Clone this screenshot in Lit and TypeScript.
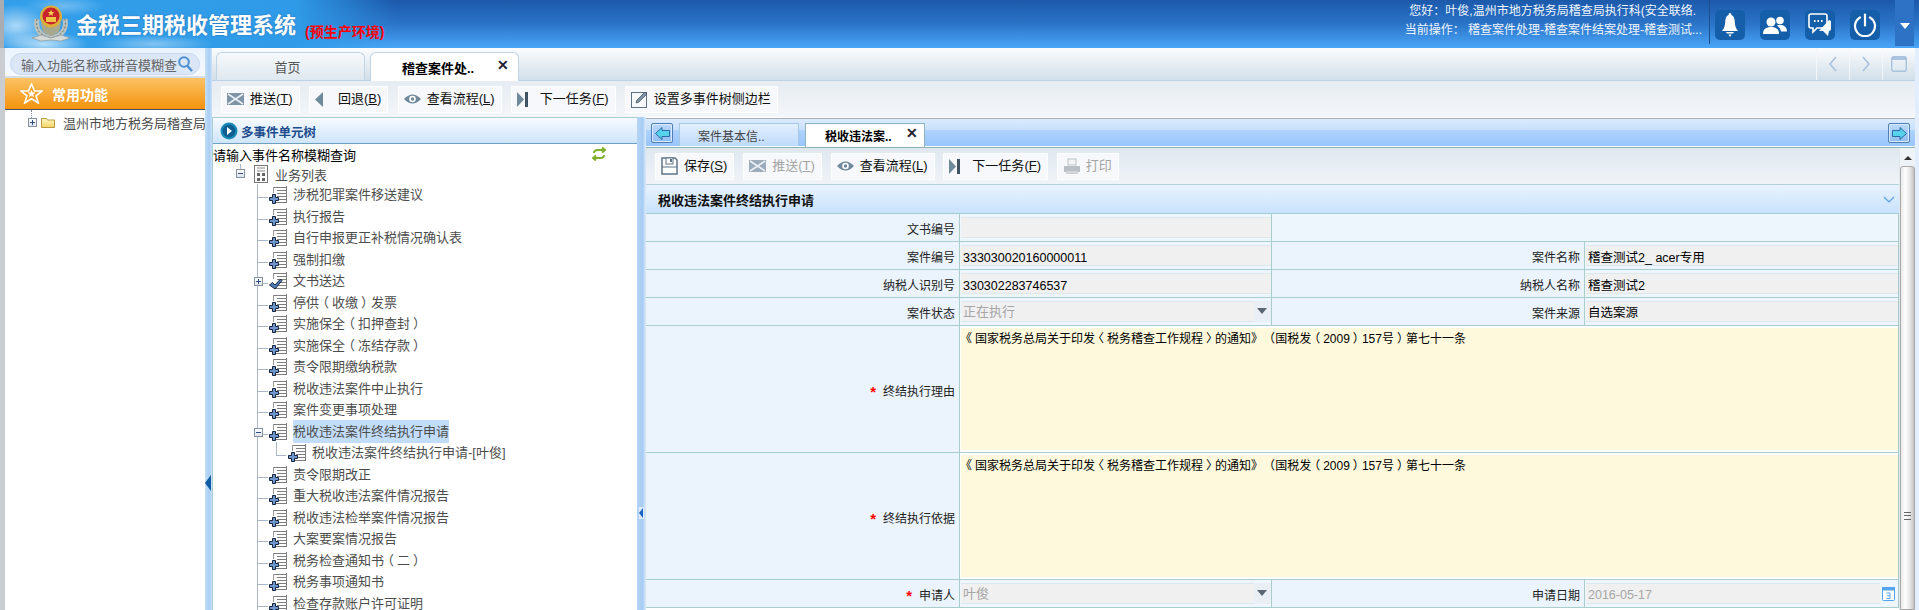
import { LitElement, html, css, svg } from "lit";
import { customElement } from "lit/decorators.js";

const FONT = css`"Liberation Sans", "Noto Sans CJK SC", sans-serif`;

const docBase = svg`
  <rect x="3.5" y="2.5" width="14" height="17" fill="#fff" stroke="none"/>
  <path d="M5 3.5h12M8 6.5h9M8 9.5h9M8 12.5h9M8 15.5h9M5 18.5h12M17.5 2v17" stroke="#7d7d7d" fill="none"/>
  <path d="M4.5 3v6" stroke="#9a9a9a" fill="none"/>`;
const plusIcon = html`<svg class="node" width="24" height="21" viewBox="0 0 24 21">
  ${docBase}
  <path d="M3.5 10.5h3v3h3v3h-3v3h-3v-3h-3v-3h3z" fill="#6d96cc" stroke="#16233a" stroke-width="1"/>
</svg>`;
const checkIcon = html`<svg class="node" width="24" height="21" viewBox="0 0 24 21">
  ${docBase}
  <path d="M0.5 15l3-2.5 2.5 2.5 5.5-6 1.500 1.500-7 8.500z" fill="#4f7db5" stroke="#16233a" stroke-width="1"/>
</svg>`;
const icons: Record<string, unknown> = {
  mail: html`<svg width="17" height="12" viewBox="0 0 17 12"><rect width="17" height="12" fill="#7e93a6"/><path d="M1 1l15 10M16 1L1 11" stroke="#e8eef3" stroke-width="1.6"/></svg>`,
  back: html`<svg width="9" height="15" viewBox="0 0 9 15"><path d="M8 0v15L0 7.5z" fill="#6f8a9b"/></svg>`,
  eye: html`<svg width="17" height="12" viewBox="0 0 17 12"><path d="M0 6Q8.5-3 17 6 8.5 15 0 6z" fill="#70899b"/><circle cx="8.5" cy="6" r="3.3" fill="#fff"/><circle cx="8.5" cy="6" r="1.7" fill="#70899b"/></svg>`,
  next: html`<svg width="11" height="15" viewBox="0 0 11 15"><path d="M0 0v15l7-7.5z" fill="#6f8a9b"/><rect x="8" width="3" height="15" fill="#3f5363"/></svg>`,
  edit: html`<svg width="18" height="18" viewBox="0 0 18 18"><rect x=".5" y="2.5" width="15" height="15" fill="#f7f9fa" stroke="#5d7182"/><path d="M5 13l1-3 8-8 2 2-8 8z" fill="#7e93a6" stroke="#40505e" stroke-width=".7"/></svg>`,
  save: html`<svg width="17" height="18" viewBox="0 0 17 18"><path d="M1 1h13l2 2v14H1z" fill="#fff" stroke="#5f7688" stroke-width="1.5"/><rect x="5" y="1" width="7" height="6" fill="#fff" stroke="#5f7688"/><rect x="9" y="2" width="2" height="3" fill="#5f7688"/><path d="M1 10h15" stroke="#5f7688"/></svg>`,
  print: html`<svg width="18" height="17" viewBox="0 0 18 17"><rect x="5" y="1" width="8" height="6" fill="#f0f2f4" stroke="#a9b2ba"/><path d="M1 8h16v6H1z" fill="#a5acb2"/><rect x="3" y="13" width="12" height="3" fill="#c4c9ce"/></svg>`,
};

const sp = (s: string) => html`<span class="u">${s}</span>`;

/* CJK brackets in the reference sit centred in their cell; the SC face pushes them toward the enclosed text.
   A closing bracket directly followed by an opening one already has the full gap, so that pair is left unshifted. */
const punct = (s: string) =>
  s.split(/(》（|[（）〈〉《》])/).map((p) => {
    if (p === "》（") return html`<span class="pn">》</span><span class="pn">（</span>`;
    if (/^[（〈《]$/.test(p)) return html`<span class="po">${p}</span>`;
    if (/^[）〉》]$/.test(p)) return html`<span class="pc">${p}</span>`;
    return p;
  });

interface Btn { icon: string; label: string; key?: string; off?: boolean; }
const topBtns: Btn[] = [
  { icon: "mail", label: "推送", key: "T" },
  { icon: "back", label: "回退", key: "B" },
  { icon: "eye", label: "查看流程", key: "L" },
  { icon: "next", label: "下一任务", key: "F" },
  { icon: "edit", label: "设置多事件树侧边栏" },
];
const formBtns: Btn[] = [
  { icon: "save", label: "保存", key: "S" },
  { icon: "mail", label: "推送", key: "T", off: true },
  { icon: "eye", label: "查看流程", key: "L" },
  { icon: "next", label: "下一任务", key: "F" },
  { icon: "print", label: "打印", off: true },
];

interface Node { t: string; check?: boolean; toggle?: string; sel?: boolean; sub?: boolean; }
const nodes: Node[] = [
  { t: "涉税犯罪案件移送建议" }, { t: "执行报告" }, { t: "自行申报更正补税情况确认表" }, { t: "强制扣缴" },
  { t: "文书送达", check: true, toggle: "+" }, { t: "停供（收缴）发票" }, { t: "实施保全（扣押查封）" },
  { t: "实施保全（冻结存款）" }, { t: "责令限期缴纳税款" }, { t: "税收违法案件中止执行" }, { t: "案件变更事项处理" },
  { t: "税收违法案件终结执行申请", toggle: "-", sel: true }, { t: "税收违法案件终结执行申请-[叶俊]", sub: true },
  { t: "责令限期改正" }, { t: "重大税收违法案件情况报告" }, { t: "税收违法检举案件情况报告" }, { t: "大案要案情况报告" },
  { t: "税务检查通知书（二）" }, { t: "税务事项通知书" }, { t: "检查存款账户许可证明" },
];

const REASON = "《国家税务总局关于印发〈税务稽查工作规程〉的通知》（国税发（2009）157号）第七十一条";

@customElement("app-root")
export class AppRoot extends LitElement {
  static styles = css`
    :host { display: flex; flex-direction: column; width: 1919px; height: 610px; overflow: hidden; background: #fff;
      font-family: ${FONT}; font-size: 12px; color: #222; }
    * { box-sizing: border-box; }
    .u { text-decoration: underline; }
    .po, .pc, .pn { display: inline-block; }
    .po { transform: translateX(-3px); }
    .pc { transform: translateX(3px); }

    /* header */
    .hdr { height: 48px; flex: none; display: flex; align-items: stretch; border-left: 4px solid #a9adb2;
      background:
        radial-gradient(ellipse 34px 22px at 12px 26px, rgba(255,255,255,.6), transparent),
        radial-gradient(ellipse 44px 12px at 40px 44px, rgba(255,255,255,.65), transparent),
        radial-gradient(ellipse 60px 9px at 150px 44px, rgba(255,255,255,.4), transparent),
        radial-gradient(ellipse 40px 10px at 60px 6px, rgba(255,255,255,.3), transparent),
        linear-gradient(90deg, #339fea 0, #2f9be8 290px, rgba(47,155,232,0) 392px),
        linear-gradient(180deg, #1c59aa 0, #2b74c8 50%, #4aa6f8 100%); }
    .emblem { margin: 5px 0 0 28px; flex: none; }
    .title { margin: 9px 0 0 6px; font-size: 22px; line-height: 34px; font-weight: 700; color: #fbfdff; white-space: nowrap;
      text-shadow: 0 0 2px rgba(30,80,140,.6); }
    .env { margin: 20px 0 0 9px; font-size: 14px; line-height: 24px; color: #f00; white-space: nowrap; font-weight: 700; }
    .who { margin-left: auto; padding-top: 2px; text-align: right; color: #eef5fd; line-height: 18px; white-space: nowrap; padding-right: 7px; }
    .who div:first-child { padding-right: 6px; }
    .who div:last-child { padding-top: 1px; }
    .tools { display: flex; height: 44px; border-left: 1px solid #1a4f90; padding: 10px 0 0 5px; gap: 15px; }
    .tool { width: 30px; height: 30px; border-radius: 5px; background: #155ea9; display: flex; align-items: center; justify-content: center; }
    .drop { margin-left: 15px; width: 19px; height: 46px; background: #2d72c4; display: flex; align-items: center; justify-content: center; padding-top: 6px; }
    .hdr-end { width: 5px; }

    /* frame */
    .frame { flex: 1; min-height: 0; display: flex; }
    .lstrip { width: 5px; flex: none; background: #c9ccd0; }
    .side { width: 200px; flex: none; display: flex; flex-direction: column; overflow: hidden; }
    .sbox { height: 30px; flex: none; padding: 5px; border-bottom: 2px solid #d5dde6; background: linear-gradient(#eaf3fd, #f5f9fe); }
    .pill { height: 22px; border: 1px solid #c8d9ef; border-radius: 11px; background: #dbe7f6; display: flex; align-items: center;
      padding-left: 10px; font-size: 13px; color: #666; white-space: nowrap; overflow: hidden; }
    .pill svg { flex: none; margin-left: 1px; }
    .fav { height: 32px; flex: none; border-bottom: 1px solid #45505c; background: linear-gradient(#fdc263, #f4930e); display: flex; align-items: center;
      padding-left: 15px; color: #fff; font-size: 14px; font-weight: 700; }
    .fav svg { margin-right: 9px; flex: none; }
    .org { position: relative; display: flex; align-items: center; height: 24px; padding: 0 0 0 36px; font-size: 13px; color: #4d4d4d; white-space: nowrap; overflow: hidden; }
    .org svg { margin-right: 8px; flex: none; }
    .org::before { content: ""; position: absolute; left: 26px; top: 0; height: 8px; border-left: 1px dotted #7d8894; }
    .tg { position: absolute; width: 9px; height: 9px; border: 1px solid #8592a3; background: linear-gradient(#fff, #dfe4ea); z-index: 1; }
    .tg::before { content: ""; position: absolute; left: 1px; right: 1px; top: 3px; height: 1px; background: #2f4c80; }
    .tg.plus::after { content: ""; position: absolute; top: 1px; bottom: 1px; left: 3px; width: 1px; background: #2f4c80; }
    .org .tg { left: 23px; top: 8px; }

    .vsplit { width: 7px; flex: none; background: linear-gradient(90deg, #c5dff7, #a9cdf3 60%, #cbe1f8); position: relative; }
    .vsplit::after { content: ""; position: absolute; left: 0; top: 427px; border: 8px solid transparent; border-left: 0; border-right: 6px solid #0f5aa5; }
    .cont { flex: 1; min-width: 0; display: flex; flex-direction: column; }
    .rstrip { width: 4px; flex: none; background: #e2eefb; }

    /* main tabs */
    .mtabs { height: 33px; flex: none; display: flex; align-items: flex-end; padding-left: 4px; gap: 5px; border-bottom: 1px solid #bdd2e4;
      background: linear-gradient(#fbfcfd, #d2dfe9); }
    .mtab { width: 149px; height: 28px; border: 1px solid #c0d4e4; border-bottom: 0; border-radius: 6px 6px 0 0; display: flex; align-items: center;
      font-size: 13px; color: #555; justify-content: center; padding-right: 6px; background: linear-gradient(#f6f9fb, #dfe8ef); }
    .mtab.on { background: #fff; color: #000; font-weight: 700; justify-content: flex-start; padding-left: 31px; position: relative; height: 29px; margin-bottom: -1px; }
    .x { font-weight: 700; color: #223; font-size: 14px; }
    .mtab .x { position: absolute; right: 9px; top: 4px; }
    .nav { margin-left: auto; display: flex; align-self: stretch; }
    .nav div { width: 33px; border-left: 1px solid #f4f7fa; display: flex; align-items: center; justify-content: center; }

    /* toolbars */
    .bar { display: flex; align-items: center; }
    .topbar { height: 36px; flex: none; padding-left: 10px; gap: 11.3px; background: linear-gradient(#e6ecf2, #f3f6f9); }
    .btn { height: 25px; display: flex; align-items: center; padding: 0 6px 0 5px; background: #f6f8fb; box-shadow: 0 0 2px #fff, 0 0 0 1px #fbfcfd; font-size: 13px; color: #111; white-space: nowrap; }
    .btn > span:last-child { padding-bottom: 3px; }
    .btn.off { color: #a4a4a4; }
    .btn.off svg { opacity: .75; }
    .slot { width: 23px; flex: none; display: flex; align-items: center; }

    .body { flex: 1; min-height: 0; display: flex; }

    /* tree panel */
    .tree { width: 425px; flex: none; border: 1px solid #a7cfd2; border-width: 1px 0 0 1px; display: flex; flex-direction: column; overflow: hidden; background: #fff; }
    .thead { height: 26px; flex: none; display: flex; align-items: center; border-bottom: 1px solid #6da0c4; background: linear-gradient(#f5faff, #cfe5fa); padding-left: 7px;
      font-size: 12.5px; font-weight: 700; color: #1d4c8c; }
    .thead svg { margin-right: 3px; }
    .thead span { padding-top: 2px; }
    .query { height: 20px; flex: none; display: flex; align-items: center; justify-content: space-between; font-size: 13px; color: #000; padding-right: 31px; white-space: nowrap; }
    .root { height: 20px; flex: none; position: relative; display: flex; align-items: center; padding-left: 41px; font-size: 13px; color: #4d4d4d; }
    .root svg { margin-right: 7px; }
    .root .tg { left: 23px; top: 5px; }
    .root::before { content: ""; position: absolute; left: 27px; top: 0; height: 5px; border-left: 1px solid #a9b7c9; }
    .list { margin-left: 44px; border-left: 1px solid #a9b7c9; }
    .row { height: 21.5px; display: flex; align-items: center; position: relative; font-size: 13px; color: #4d4d4d; white-space: nowrap; }
    .cn { width: 11px; align-self: stretch; flex: none; position: relative; }
    .cn::after { content: ""; position: absolute; left: 0; top: 13px; width: 10px; border-top: 1px solid #a9b7c9; }
    .row.sub { padding-left: 18px; }
    .row.sub .cn { width: 12px; }
    .row.sub .cn::before { content: ""; position: absolute; left: 0; top: 0; height: 13px; border-left: 1px solid #a9b7c9; }
    .node { flex: none; display: block; overflow: visible; }
    .row .tg { left: -4px; top: 7px; }
    .tx { line-height: 22px; padding-top: 1px; height: 23px; }
    .row .sel { background: #c2ddfb; }

    .vsplit2 { width: 8px; flex: none; background: linear-gradient(90deg, #b7d5f5, #a6ccf3 70%, #cfe3fa); position: relative; }
    .vsplit2::after { content: ""; position: absolute; left: 2px; top: 390px; width: 5px; height: 12px; background: #dcecfc; }
    .vsplit2::before { content: ""; position: absolute; z-index: 1; left: 2px; top: 391px; border: 5px solid transparent; border-left: 0; border-right: 4px solid #1c62c0; }

    /* right panel */
    .pane { flex: 1; min-width: 0; display: flex; flex-direction: column; border-top: 1px solid #fff; border-left: 1px solid #d6e6f7; }
    .stabs { height: 29px; flex: none; display: flex; align-items: flex-end; border-top: 1px solid #a8aeb3; border-bottom: 1px solid #fff; padding-left: 5px;
      background: linear-gradient(#dcebfe, #c6dffc 42%, #aed3fd 42%, #99c5fb); position: relative; }
    .sq { width: 22px; height: 20px; margin-bottom: 3px; flex: none; border: 1px solid #4f7fb4; border-radius: 2px; background: linear-gradient(#bcd8fa, #8fbdf2); display: flex; align-items: center; justify-content: center; box-shadow: inset 0 0 0 1px #d9e9fc; }
    .stab { height: 23px; width: 120px; margin-left: 6px; border: 1px solid #a7c7e3; border-bottom: 0; display: flex; align-items: center; background: linear-gradient(#e2effe, #bedafb); color: #444; padding-left: 18px; }
    .stab.on { background: #fff; color: #000; font-weight: 700; height: 24px; margin-bottom: -1px; padding-left: 19px; position: relative; border-color: #8fb2c4; }
    .stab .x { position: absolute; right: 6px; top: 1px; }
    .sq.r { margin-left: auto; margin-right: 5px; }
    .scroller { flex: 1; min-height: 0; display: flex; border-top: 1px solid #8fb2b4; }
    .form { flex: 1; min-width: 0; overflow: hidden; display: flex; flex-direction: column; }
    .formbar { height: 36px; flex: none; padding-left: 10px; gap: 10.8px; background: linear-gradient(#dfe7ee, #f0f4f8); }
    .sect { height: 30px; flex: none; border-top: 1px solid #b2d0dc; border-bottom: 1px solid #a6cbd8; display: flex; align-items: center; justify-content: space-between;
      padding: 0 4px 0 12px; font-size: 13px; font-weight: 700; color: #111; background: linear-gradient(#e8f3fe, #c9e2fc); }
    .grid { display: grid; grid-template-columns: 314px 312px 313px 314px; grid-template-rows: repeat(4, 28px) 127px 127px 28px; }
    .lab, .val { border-right: 1px solid #a8cdca; border-bottom: 1px solid #a8cdca; }
    .lab { background: #ebf4fd; display: flex; align-items: center; justify-content: flex-end; padding: 2px 4px 0 0; color: #222; white-space: nowrap; }
    .star { color: #f00; font-weight: 700; font-size: 15px; margin-right: 7px; line-height: 12px; padding-top: 3px; }
    .val { background: #edf5fd; padding: 3px 0 3px 1px; }
    .blank { grid-column: span 2; background: #edf5fd; border-bottom: 1px solid #a8cdca; border-right: 1px solid #a8cdca; }
    .inp { height: 21px; background: #f0f0f0; border-top: 1px solid #dce8ec; border-bottom: 1px solid #dce8ec; padding: 2px 0 0 2px; font-size: 12.5px; line-height: 20px; color: #000; white-space: nowrap; }
    .inp.low { padding-top: 1px; }
    .inp.dis { color: #a6a6a6; }
    .sel-w { display: flex; height: 21px; background: #e9eff5; position: relative; }
    .sel-w .inp { flex: 1; font-size: 13px; margin-right: 17px; padding-top: 0; }
    .sel-w::after { content: ""; position: absolute; right: 4px; top: 7px; border: 5px solid transparent; border-bottom: 0; border-top: 6px solid #5a6472; }
    .date { display: flex; align-items: center; gap: 2px; }
    .date .inp { width: 294px; flex: none; padding-top: 1px; }
    .ta { grid-column: span 3; background: #fff; border-bottom: 1px solid #a8cdca; border-right: 1px solid #a8cdca; padding: 2px 0 2px 1px; }
    .ta div { height: 100%; background: #fef9dc; padding: 3px 0 0 2px; line-height: 16px; color: #000; }

    .sb { width: 16px; flex: none; background: #eef3f8; display: flex; flex-direction: column; align-items: center; border-left: 1px solid #dfe6ec; }
    .sb i { flex: none; margin-top: 8px; margin-bottom: 6px; border: 4px solid transparent; border-top: 0; border-bottom: 4px solid #333; }
    .thumb { flex: 1; width: 15px; border: 1px solid #a9a9a9; border-radius: 3px 3px 0 0; background: linear-gradient(90deg, #eaeaea, #fdfdfd 35%, #e4e4e4 70%, #c2c2c2); display: flex; flex-direction: column; align-items: center; padding-top: 345px; }
    .thumb b { width: 7px; height: 8px; border-top: 1px solid #666; border-bottom: 1px solid #666; position: relative; }
    .thumb b::after { content: ""; position: absolute; left: 0; right: 0; top: 2px; height: 2px; border-top: 1px solid #666; }
  `;

  private renderBtn(b: Btn) {
    return html`<div class="btn ${b.off ? "off" : ""}"><span class="slot">${icons[b.icon]}</span>
      <span>${b.label}${b.key ? html`(${sp(b.key)})` : ""}</span></div>`;
  }

  private toggle(k?: string) {
    if (!k) return "";
    return html`<span class="tg ${k === "+" ? "plus" : ""}"></span>`;
  }

  private label(t: string, req = false) {
    return html`<div class="lab">${req ? html`<span class="star">*</span>` : ""}${t}</div>`;
  }

  private field(t: string, low = false) {
    return html`<div class="val"><div class="inp ${low ? "low" : ""}">${t}</div></div>`;
  }

  private select(t: string) {
    return html`<div class="val"><div class="sel-w"><div class="inp dis">${t}</div></div></div>`;
  }

  render() {
    return html`
      <div class="hdr">
        <svg class="emblem" width="38" height="38" viewBox="0 0 38 38">
          <path d="M5 14c-2 10 3 17 14 19 11-2 16-9 14-19" fill="none" stroke="#b9c0bd" stroke-width="5"/>
          <path d="M5 14c-2 10 3 17 14 19 11-2 16-9 14-19" fill="none" stroke="#6f7a78" stroke-width="1" stroke-dasharray="2 2"/>
          <path d="M0 33l9-3 10 3 10-3 9 3-9 3-10-1-10 1z" fill="#d5d9d7" stroke="#8b9492" stroke-width=".6"/>
          <path d="M9 18h20l-2 9-8 4-8-4z" fill="#a8a88e"/>
          <circle cx="19" cy="11.500" r="11" fill="#dcae3a"/>
          <circle cx="19" cy="11" r="8.500" fill="#c8232c"/>
          <path d="M19 4.500l.9 2.500h2.600l-2.100 1.500.8 2.500-2.200-1.500-2.200 1.500.8-2.500-2.100-1.500h2.600z" fill="#f6d34a"/>
          <rect x="14" y="12" width="10" height="5" fill="#efc546"/>
        </svg>
        <div class="title">金税三期税收管理系统</div>
        <div class="env">(预生产环境)</div>
        <div class="who">
          <div>您好：叶俊,温州市地方税务局稽查局执行科(安全联络.</div>
          <div>当前操作： 稽查案件处理-稽查案件结案处理-稽查测试...</div>
        </div>
        <div class="tools">
          <div class="tool"><svg width="16" height="24" viewBox="0 0 16 24"><path d="M8 0c1 0 1.400.8 1.400 2 2.600 1 3.200 3.600 3.400 7 .2 4 1 6 3.200 9H0c2.200-3 3-5 3.200-9 .2-3.400.8-6 3.400-7C6.600.8 7 0 8 0z" fill="#fff"/><path d="M4 19h8l-1 1.500H5zM6.500 21.500h3L8 24z" fill="#fff"/></svg></div>
          <div class="tool"><svg width="24" height="18" viewBox="0 0 24 18"><circle cx="8" cy="6" r="4.500" fill="#fff"/><path d="M0 18c0-5 3-7 8-7s8 2 8 7z" fill="#fff"/><circle cx="17" cy="4.500" r="3.800" fill="#fff"/><path d="M14 9.500c6-1.500 10 1 10 6h-6c-.5-2.500-2-4.500-4-6z" fill="#fff"/></svg></div>
          <div class="tool"><svg width="24" height="24" viewBox="0 0 24 24" fill="none" stroke="#fff" stroke-width="1.600"><path d="M3 1h14a2 2 0 0 1 2 2v10a2 2 0 0 1-2 2H9l-4 4v-4H3a2 2 0 0 1-2-2V3a2 2 0 0 1 2-2z"/><path d="M21 7c1.500 0 2 1 2 2v7c0 1-1 2-2 2l-1 5-5-5h-4" fill="#fff" stroke="none" opacity=".95"/><path d="M6 8h1.500M9.500 8H11M13 8h1.500" stroke-width="1.800"/></svg></div>
          <div class="tool"><svg width="24" height="24" viewBox="0 0 24 24" fill="none" stroke="#fff" stroke-width="2.200" stroke-linecap="round"><path d="M7 4.500a10 10 0 1 0 10 0"/><path d="M12 1.500v11"/></svg></div>
        </div>
        <div class="drop"><svg width="10" height="6" viewBox="0 0 10 6"><path d="M0 0h10L5 6z" fill="#fff"/></svg></div>
        <div class="hdr-end"></div>
      </div>

      <div class="frame">
        <div class="lstrip"></div>
        <div class="side">
          <div class="sbox"><div class="pill">输入功能名称或拼音模糊查
            <svg width="15" height="16" viewBox="0 0 15 16" fill="none" stroke="#4d8fd0"><circle cx="6" cy="6" r="4.800" stroke-width="2"/><path d="M9.500 10l4.500 5" stroke-width="2.500"/></svg></div></div>
          <div class="fav">
            <svg width="23" height="21" viewBox="0 0 23 21"><path d="M11.500 1l3 7h7.500l-6 4.800 2.300 7.200-6.800-4.200-6.800 4.200L7 12.800 1 8h7.500z" fill="#f4a32a" stroke="#fff" stroke-width="1.600"/><path d="M11.500 7l1.200 2.600h2.800l-2.200 1.800.8 2.800-2.600-1.600-2.600 1.600.8-2.800-2.200-1.800h2.800z" fill="#fff"/></svg>
            常用功能
          </div>
          <div class="org">
            <span class="tg plus"></span>
            <svg width="14" height="11" viewBox="0 0 14 11"><path d="M.5 1.500h5l1 1.500h7v7.500H.5z" fill="url(#fg)" stroke="#b89a3c"/><defs><linearGradient id="fg" x1="0" y1="0" x2="0" y2="1"><stop offset="0" stop-color="#fff6c4"/><stop offset="1" stop-color="#f6d566"/></linearGradient></defs></svg>
            温州市地方税务局稽查局
          </div>
        </div>
        <div class="vsplit"></div>
        <div class="cont">
          <div class="mtabs">
            <div class="mtab">首页</div>
            <div class="mtab on">稽查案件处..<span class="x">✕</span></div>
            <div class="nav">
              <div><svg width="10" height="16" viewBox="0 0 10 16" fill="none" stroke="#a9c2de" stroke-width="1.600"><path d="M8 1L2 8l6 7"/></svg></div>
              <div><svg width="10" height="16" viewBox="0 0 10 16" fill="none" stroke="#a9c2de" stroke-width="1.600"><path d="M2 1l6 7-6 7"/></svg></div>
              <div><svg width="16" height="16" viewBox="0 0 16 16"><rect x=".7" y=".7" width="14.600" height="14.600" rx="2" fill="none" stroke="#a9c2de" stroke-width="1.400"/><rect x="1" y="1" width="14" height="3" fill="#a9c2de"/></svg></div>
            </div>
          </div>
          <div class="bar topbar">${topBtns.map((b) => this.renderBtn(b))}</div>
          <div class="body">
            <div class="tree">
              <div class="thead">
                <svg width="18" height="18" viewBox="0 0 18 18"><circle cx="9" cy="9" r="8.500" fill="#1c8bb8"/><circle cx="9" cy="9" r="6.500" fill="#0d5f92"/><path d="M7 5l5 4-5 4z" fill="#fff"/></svg>
                <span>多事件单元树</span>
              </div>
              <div class="query"><span>请输入事件名称模糊查询</span>
                <svg width="14" height="14" viewBox="0 0 14 14" fill="none" stroke="#7fb02c" stroke-width="2"><path d="M2 6c0-2 2-3 4-3h6M10 .5L13 3l-3 2.500"/><path d="M12 8c0 2-2 3-4 3H2M4 8.500L1 11l3 2.500"/></svg>
              </div>
              <div class="root">
                <span class="tg"></span>
                <svg width="14" height="18" viewBox="0 0 14 18"><rect x=".5" y=".5" width="13" height="17" fill="#fff" stroke="#777"/><path d="M3 3h8M3 6h8" stroke="#888"/><rect x="3" y="8" width="3" height="3" fill="#666"/><rect x="8" y="8" width="3" height="3" fill="#666"/><rect x="3" y="13" width="3" height="3" fill="#666"/><rect x="8" y="13" width="3" height="3" fill="#666"/></svg>
                业务列表
              </div>
              <div class="list">
                ${nodes.map((n) => html`<div class="row ${n.sub ? "sub" : ""}">
                  ${this.toggle(n.toggle)}
                  <span class="cn"></span>
                  ${n.check ? checkIcon : plusIcon}
                  <span class="tx ${n.sel ? "sel" : ""}">${punct(n.t)}</span>
                </div>`)}
              </div>
            </div>
            <div class="vsplit2"></div>
            <div class="pane">
              <div class="stabs">
                <div class="sq"><svg width="15" height="13" viewBox="0 0 15 13"><path d="M7 .5v3h7.500v6H7v3L.5 6.500z" fill="#56d2ea" stroke="#2d6aa8"/></svg></div>
                <div class="stab">案件基本信..</div>
                <div class="stab on">税收违法案..<span class="x">✕</span></div>
                <div class="sq r"><svg width="15" height="13" viewBox="0 0 15 13"><path d="M8 .5v3H.5v6H8v3l6.500-6z" fill="#56d2ea" stroke="#2d6aa8"/></svg></div>
              </div>
              <div class="scroller">
                <div class="form">
                  <div class="bar formbar">${formBtns.map((b) => this.renderBtn(b))}</div>
                  <div class="sect"><span>税收违法案件终结执行申请</span>
                    <svg width="12" height="7" viewBox="0 0 12 7" fill="none" stroke="#5aa0e6" stroke-width="1.200"><path d="M1 1l5 5 5-5"/></svg></div>
                  <div class="grid">
                    ${this.label("文书编号")}${this.field("")}<div class="blank"></div>
                    ${this.label("案件编号")}${this.field("333030020160000011")}${this.label("案件名称")}${this.field("稽查测试2_ acer专用")}
                    ${this.label("纳税人识别号")}${this.field("330302283746537")}${this.label("纳税人名称")}${this.field("稽查测试2")}
                    ${this.label("案件状态")}${this.select("正在执行")}${this.label("案件来源")}${this.field("自选案源", true)}
                    ${this.label("终结执行理由", true)}<div class="ta"><div>${punct(REASON)}</div></div>
                    ${this.label("终结执行依据", true)}<div class="ta"><div>${punct(REASON)}</div></div>
                    ${this.label("申请人", true)}${this.select("叶俊")}${this.label("申请日期")}
                    <div class="val date"><div class="inp dis">2016-05-17</div>
                      <svg width="13" height="15" viewBox="0 0 13 15"><rect x=".5" y="1.500" width="12" height="13" rx="1" fill="#fff" stroke="#55a5ee"/><rect x="0" y="1" width="13" height="3.500" fill="#55a5ee"/><path d="M4.500 7h3.500v5.500H4.500M5 9.700h3" fill="none" stroke="#55a5ee"/></svg></div>
                  </div>
                </div>
                <div class="sb"><i></i><div class="thumb"><b></b></div></div>
              </div>
            </div>
          </div>
        </div>
        <div class="rstrip"></div>
      </div>
    `;
  }
}
